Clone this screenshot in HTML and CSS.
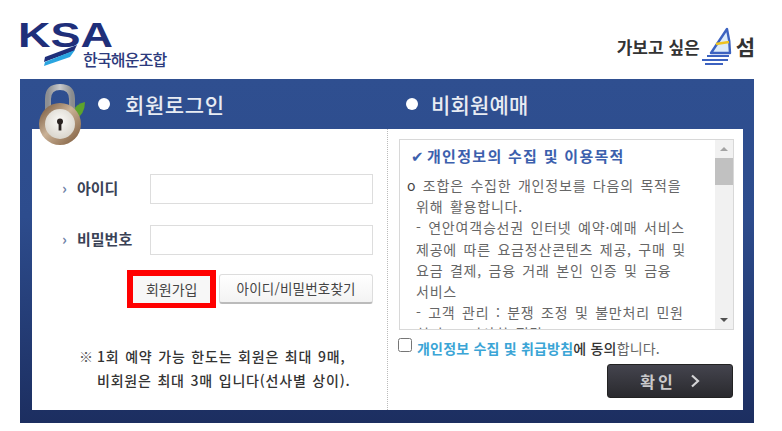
FILE: index.html
```html
<!DOCTYPE html>
<html lang="ko">
<head>
    <meta charset="UTF-8">
    <meta name="viewport" content="width=device-width, initial-scale=1.0">
    <title>회원로그인</title>
    <link rel="stylesheet" href="styles.css">
</head>
<body>
    <header class="top">
        <div class="logo">
            <svg class="logo-mark" width="128" height="50" viewBox="0 0 128 50">
                <text x="-2" y="27" class="logo-letters" textLength="95" lengthAdjust="spacingAndGlyphs">KSA</text>
                <path d="M25 37 L57 25 L54 31 L24 42 Z" fill="#1f2f7a"/>
                <path d="M24 46 L25 42 L55 30 L50 37 Z" fill="#2aa5e0"/>
            </svg>
            <span class="logo-name">한국해운조합</span>
        </div>
        <div class="slogan">
            <span>가보고 싶은</span>
            <svg width="32" height="40" viewBox="0 0 32 40">
                <path d="M10 27 L26 3 Q29 15 29 27 Z" fill="#dcebfa" stroke="#3c62c0" stroke-width="2.4" stroke-linejoin="round"/>
                <path d="M15 18 L28 16" stroke="#eec321" stroke-width="2.4"/>
                <path d="M6 30 H28 M1 34 H27 M4 38 H22" stroke="#3c62c0" stroke-width="2.2"/>
            </svg>
            <b>섬</b>
        </div>
    </header>

    <main class="panel">
        <svg class="lock" width="48" height="66" viewBox="0 0 48 66">
            <defs>
                <linearGradient id="shackle" x1="0" x2="1" y1="0" y2="0">
                    <stop offset="0" stop-color="#8d8f92"/>
                    <stop offset="0.5" stop-color="#c9cacc"/>
                    <stop offset="1" stop-color="#8a8c8e"/>
                </linearGradient>
                <linearGradient id="ring" x1="0" x2="1" y1="0" y2="1">
                    <stop offset="0" stop-color="#6f4f33"/>
                    <stop offset="0.45" stop-color="#c9b196"/>
                    <stop offset="1" stop-color="#7a5636"/>
                </linearGradient>
                <radialGradient id="face" cx="0.5" cy="0.4" r="0.6">
                    <stop offset="0" stop-color="#fbfaf7"/>
                    <stop offset="1" stop-color="#d9d5cc"/>
                </radialGradient>
            </defs>
            <path d="M35 28 Q38 21 47 19 Q47 31 37 37 Z" fill="#5da32c"/>
            <path d="M10 30 V16 Q10 4 22 4 Q34 4 34 16 V30" fill="none" stroke="url(#shackle)" stroke-width="6"/>
            <circle cx="22" cy="41" r="21" fill="url(#ring)"/>
            <circle cx="22" cy="41" r="15" fill="url(#face)"/>
            <circle cx="22" cy="38.5" r="3" fill="#2a2320"/>
            <rect x="20.6" y="38.5" width="2.8" height="9" fill="#2a2320"/>
        </svg>
        <div class="tabs">
            <h2 class="tab tab-member"><i class="dot"></i>회원로그인</h2>
            <h2 class="tab tab-guest"><i class="dot"></i>비회원예매</h2>
        </div>
        <div class="sheet">
            <section class="login">
                <div class="field">
                    <label for="userId">아이디</label>
                    <input type="text" id="userId">
                </div>
                <div class="field">
                    <label for="userPw">비밀번호</label>
                    <input type="password" id="userPw">
                </div>
                <div class="actions">
                    <a href="#" class="btn btn-join">회원가입</a>
                    <a href="#" class="btn btn-find">아이디/비밀번호찾기</a>
                </div>
                <p class="notice">
                    <span class="mark">※</span>1회 예약 가능 한도는 회원은 최대 9매,<br>
                    비회원은 최대 3매 입니다(선사별 상이).
                </p>
            </section>
            <section class="guest">
                <div class="terms">
                    <div class="terms-body">
                        <h3><span class="check">✔</span>개인정보의 수집 및 이용목적</h3>
                        <p class="terms-text"><span class="bullet">o</span> 조합은 수집한 개인정보를 다음의 목적을<br>
                        위해 활용합니다.<br>
                        - 연안여객승선권 인터넷 예약·예매 서비스<br>
                        제공에 따른 요금정산콘텐츠 제공, 구매 및<br>
                        요금 결제, 금융 거래 본인 인증 및 금융<br>
                        서비스<br>
                        - 고객 관리 : 분쟁 조정 및 불만처리 민원<br>
                        처리, 고지사항 전달</p>
                    </div>
                    <div class="scrollbar">
                        <i class="arrow-up"></i>
                        <div class="track"><div class="thumb"></div></div>
                        <i class="arrow-down"></i>
                    </div>
                </div>
                <label class="agree">
                    <input type="checkbox">
                    <span><a href="#">개인정보 수집 및 취급방침</a><b>에 동의</b>합니다.</span>
                </label>
                <div class="submit-row">
                    <button type="button" class="btn-ok">확인
                        <svg width="10" height="14" viewBox="0 0 10 14"><path d="M2 1.5 L8 7 L2 12.5" fill="none" stroke="#d4d4d6" stroke-width="2.2"/></svg>
                    </button>
                </div>
            </section>
        </div>
    </main>
</body>
</html>
```

FILE: styles.css
```css
* {
    margin: 0;
    padding: 0;
    box-sizing: border-box;
    font-family: 'Noto Sans CJK KR', 'Noto Sans', sans-serif;
}

body {
    background-color: #fff;
    overflow: hidden;
}

.top {
    height: 79px;
    display: flex;
    justify-content: space-between;
    padding: 0 27px 0 20px;
}

.logo {
    position: relative;
    width: 160px;
    padding-top: 20px;
}

.logo-mark {
    display: block;
    overflow: visible;
}

.logo-letters {
    font-family: 'Liberation Sans', sans-serif;
    font-size: 35px;
    font-weight: 700;
    fill: #1f2f7a;
}

.logo-name {
    position: absolute;
    left: 63px;
    top: 48px;
    font-size: 16px;
    line-height: 22px;
    font-weight: 500;
    letter-spacing: -0.8px;
    color: #2c3a7c;
}

.slogan {
    display: flex;
    align-items: center;
    gap: 1px;
    padding-top: 26px;
    height: 66px;
    font-size: 17px;
    font-weight: 700;
    color: #333;
}

.slogan b {
    font-size: 21px;
    font-weight: 700;
    margin-left: 2px;
}

.panel {
    position: relative;
    width: 734px;
    height: 344px;
    margin-left: 20px;
    padding: 0 11px 13px 12px;
    background: linear-gradient(#2f4f90 0%, #2d4c8d 40%, #1c2e60 100%);
}

.lock {
    position: absolute;
    left: 18px;
    top: 4px;
}

.tabs {
    height: 50px;
    display: flex;
}

.tab {
    display: flex;
    align-items: center;
    gap: 15px;
    font-size: 21px;
    font-weight: 500;
    letter-spacing: 0.6px;
    color: #e8ecf3;
}

.tab-member {
    width: 367px;
    padding-left: 66px;
}

.tab-guest {
    gap: 13px;
    padding-left: 7px;
    letter-spacing: 0.2px;
}

.dot {
    width: 12px;
    height: 12px;
    border-radius: 50%;
    background-color: #fff;
}

.sheet {
    height: 281px;
    display: flex;
    background-color: #fff;
}

.login {
    width: 356px;
    padding: 45px 14px 0 30px;
    border-right: 1px dotted #bbb;
}

.field {
    height: 51px;
    display: flex;
    align-items: flex-start;
}

.field label {
    width: 88px;
    height: 30px;
    line-height: 27px;
    font-size: 15px;
    font-weight: 700;
    color: #3a4256;
    padding-left: 15px;
    position: relative;
}

.field label::before {
    content: "›";
    position: absolute;
    left: 0;
    top: 0;
    font-weight: 700;
    color: #6f83a8;
}

.field input {
    width: 224px;
    height: 30px;
    border: 1px solid #ddd;
    background-color: #fff;
}

.actions {
    display: flex;
    align-items: center;
    margin: -6px 0 0 65px;
    gap: 3px;
}

.btn {
    display: block;
    text-align: center;
    text-decoration: none;
    font-size: 14px;
    color: #444;
    background-color: #fff;
}

.btn-join {
    width: 90px;
    height: 38px;
    line-height: 27px;
    border: 5px solid #f00;
    border-width: 6px 6px 5px;
    background-color: #f7f7f7;
}

.btn-find {
    width: 155px;
    height: 30px;
    line-height: 27px;
    font-size: 13.5px;
    letter-spacing: 0.2px;
    border: 1px solid #ddd;
    border-bottom: 2px solid #bbb;
    border-radius: 3px;
    background: linear-gradient(#fff, #f3f3f3);
}

.notice {
    position: relative;
    margin-top: 36px;
    padding-left: 35px;
    font-size: 14px;
    font-weight: 500;
    line-height: 24px;
    letter-spacing: 0.8px;
    word-spacing: 1px;
    color: #333;
    white-space: nowrap;
}

.notice .mark {
    position: absolute;
    left: 17px;
    top: 0;
    font-weight: 400;
    color: #555;
}

.guest {
    flex: 1;
    padding: 10px 9px 0 11px;
}

.terms {
    height: 191px;
    display: flex;
    border: 1px solid #d8d8d8;
    overflow: hidden;
}

.terms-body {
    flex: 1;
    padding: 5px 0 0 11px;
    overflow: hidden;
}

.terms-body h3 {
    font-size: 15px;
    line-height: 22px;
    font-weight: 700;
    color: #3c60ad;
    letter-spacing: 1.3px;
    white-space: nowrap;
}

.check {
    display: inline-block;
    width: 16px;
    font-family: 'DejaVu Sans', sans-serif;
    font-weight: 700;
    letter-spacing: 0;
}

.terms-text {
    margin: 7px 0 0 -4px;
    padding-left: 9px;
    text-indent: -9px;
    font-size: 14px;
    line-height: 21.2px;
    letter-spacing: 0.8px;
    word-spacing: 1.8px;
    color: #666;
    white-space: nowrap;
}

.bullet {
    color: #444;
}

.scrollbar {
    width: 18px;
    flex-shrink: 0;
    display: flex;
    flex-direction: column;
    align-items: center;
    background-color: #f1f1f1;
}

.track {
    flex: 1;
    width: 100%;
}

.thumb {
    width: 100%;
    height: 27px;
    background-color: #c1c1c1;
}

.arrow-up,
.arrow-down {
    width: 0;
    height: 0;
    margin: 7px 0;
    border-left: 4px solid transparent;
    border-right: 4px solid transparent;
}

.arrow-up {
    border-bottom: 4px solid #a3a3a3;
}

.arrow-down {
    border-top: 4px solid #505050;
}

.agree {
    display: flex;
    align-items: center;
    gap: 5px;
    height: 20px;
    margin: 8px 0 0 -1px;
    font-size: 14px;
    letter-spacing: 0.2px;
    color: #666;
}

.agree input {
    width: 14px;
    height: 14px;
    margin-top: -6px;
}

.agree a {
    font-weight: 700;
    color: #3ba5d6;
    text-decoration: none;
}

.agree b {
    font-weight: 500;
    color: #333;
}

.submit-row {
    display: flex;
    justify-content: flex-end;
    margin-top: 6px;
    padding-right: 1px;
}

.btn-ok {
    width: 126px;
    height: 34px;
    display: flex;
    align-items: center;
    justify-content: center;
    gap: 14px;
    border: 1px solid #222;
    border-radius: 3px;
    background: linear-gradient(#44444e, #2a2a2e);
    color: #c9c9cc;
    font-size: 16px;
    font-weight: 700;
    letter-spacing: 3px;
}
```
